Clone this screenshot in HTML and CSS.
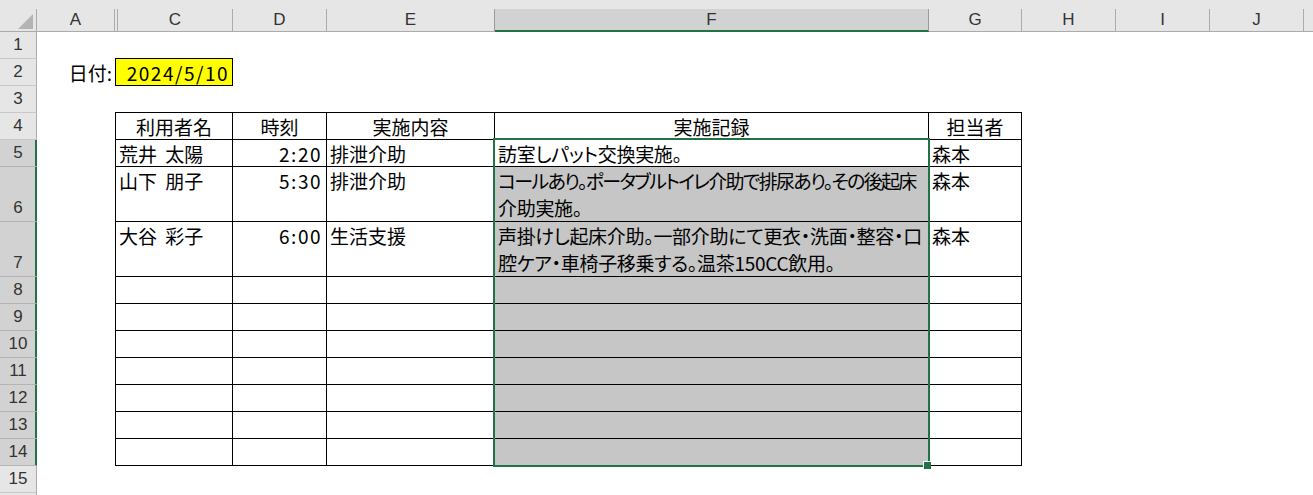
FILE: index.html
```html
<!DOCTYPE html>
<html>

<head>
    <title>介護記録</title>
    <link rel="stylesheet" href="styles.css">
</head>

<body>
    <div class="sheet">
        <!-- column letters -->
        <div class="col-heads">
            <div class="corner">
                <svg width="15" height="15" viewBox="0 0 15 15"><polygon points="15,0 15,15 0,15" fill="#b4b4b4" /></svg>
            </div>
            <div class="col-head w-a">A</div>
            <div class="col-head w-b"></div>
            <div class="col-head w-c">C</div>
            <div class="col-head w-d">D</div>
            <div class="col-head w-e">E</div>
            <div class="col-head w-f active">F</div>
            <div class="col-head w-g">G</div>
            <div class="col-head w-h">H</div>
            <div class="col-head w-i">I</div>
            <div class="col-head w-j">J</div>
            <div class="col-head w-k"></div>
        </div>

        <div class="sheet-body">
            <!-- row numbers -->
            <div class="row-heads">
                <div class="row-head">1</div>
                <div class="row-head">2</div>
                <div class="row-head">3</div>
                <div class="row-head">4</div>
                <div class="row-head sel">5</div>
                <div class="row-head sel tall">6</div>
                <div class="row-head sel tall">7</div>
                <div class="row-head sel">8</div>
                <div class="row-head sel">9</div>
                <div class="row-head sel">10</div>
                <div class="row-head sel">11</div>
                <div class="row-head sel">12</div>
                <div class="row-head sel">13</div>
                <div class="row-head sel">14</div>
                <div class="row-head">15</div>
                <div class="row-head">16</div>
            </div>

            <div class="cells">
                <div class="spacer"></div>
                <div class="date-row">
                    <span class="date-label">日付:</span>
                    <span class="date-box">2024/5/10</span>
                </div>
                <div class="spacer"></div>

                <div class="table-wrap">
                    <div class="grid">
                        <div class="cell center">利用者名</div>
                        <div class="cell center">時刻</div>
                        <div class="cell center">実施内容</div>
                        <div class="cell center">実施記録</div>
                        <div class="cell center">担当者</div>

                        <div class="cell name">荒井 太陽</div>
                        <div class="cell num">2:20</div>
                        <div class="cell">排泄介助</div>
                        <div class="cell note">訪室しパット交換実施。</div>
                        <div class="cell">森本</div>

                        <div class="cell name">山下 朋子</div>
                        <div class="cell num">5:30</div>
                        <div class="cell">排泄介助</div>
                        <div class="cell note rec"><span class="tight">コールあり。ポータブルトイレ介助で排尿あり。その後起床</span><br>介助実施。</div>
                        <div class="cell">森本</div>

                        <div class="cell name">大谷 彩子</div>
                        <div class="cell num">6:00</div>
                        <div class="cell">生活支援</div>
                        <div class="cell note rec">声掛けし起床介助。一部介助にて更衣・洗面・整容・口<br>腔ケア・車椅子移乗する。温茶150CC飲用。</div>
                        <div class="cell">森本</div>

                        <div class="cell"></div><div class="cell"></div><div class="cell"></div><div class="cell rec"></div><div class="cell"></div>
                        <div class="cell"></div><div class="cell"></div><div class="cell"></div><div class="cell rec"></div><div class="cell"></div>
                        <div class="cell"></div><div class="cell"></div><div class="cell"></div><div class="cell rec"></div><div class="cell"></div>
                        <div class="cell"></div><div class="cell"></div><div class="cell"></div><div class="cell rec"></div><div class="cell"></div>
                        <div class="cell"></div><div class="cell"></div><div class="cell"></div><div class="cell rec"></div><div class="cell"></div>
                        <div class="cell"></div><div class="cell"></div><div class="cell"></div><div class="cell rec"></div><div class="cell"></div>
                        <div class="cell"></div><div class="cell"></div><div class="cell"></div><div class="cell rec"></div><div class="cell"></div>
                    </div>

                    <!-- selected range F5:F14 -->
                    <div class="selection"><span class="handle"></span></div>
                </div>
            </div>
        </div>
    </div>
</body>

</html>
```

FILE: styles.css
```css
body {
    margin: 0;
    background: #fff;
    overflow: hidden;
    font-family: "Noto Sans CJK JP", sans-serif;
}

.sheet {
    width: 1313px;
    height: 495px;
    overflow: hidden;
}

/* column header band */
.col-heads {
    display: flex;
    height: 32px;
    padding-top: 9px;
    box-sizing: border-box;
    background: #e6e6e6;
    border-bottom: 1px solid #ababab;
}

.corner {
    width: 37px;
    box-sizing: border-box;
    border-right: 1px solid #ababab;
    display: flex;
    justify-content: flex-end;
    align-items: flex-end;
    padding: 0 3px 2px 0;
}

.corner svg {
    display: block;
}

.col-head {
    box-sizing: border-box;
    border-right: 1px solid #ababab;
    height: 22px;
    line-height: 22px;
    text-align: center;
    font-family: "Liberation Sans", Arial, sans-serif;
    font-size: 17px;
    color: #333;
}

.col-head.active {
    background: #d2d2d2;
    box-shadow: inset 0 -1px #217346, 0 1px #217346;
    border-right-color: #9b9b9b;
}

.w-a { width: 78px; }
.w-b { width: 3px; }
.w-c { width: 115px; }
.w-d { width: 94px; }
.w-e { width: 168px; border-right-color: #9b9b9b; }
.w-f { width: 434px; }
.w-g { width: 93px; }
.w-h { width: 94px; }
.w-i { width: 94px; }
.w-j { width: 94px; }
.w-k { flex: 1; border-right: none; }

.sheet-body {
    display: flex;
}

/* row numbers */
.row-heads {
    width: 37px;
    flex-shrink: 0;
}

.row-head {
    box-sizing: border-box;
    height: 27px;
    line-height: 26px;
    border-bottom: 1px solid #c8c8c8;
    border-right: 1px solid #ababab;
    background: #e6e6e6;
    text-align: center;
    font-family: "Liberation Sans", Arial, sans-serif;
    font-size: 17px;
    color: #333;
}

.row-head.tall {
    height: 55px;
    line-height: 26px;
    padding-top: 28px;
}

.row-head.sel {
    background: #d2d2d2;
    border-bottom-color: #b4b4b4;
    border-right: 1px solid #217346;
    box-shadow: inset -1px 0 #217346;
}

/* cell area */
.cells {
    flex: 1;
}

.spacer {
    height: 26px;
}

.date-row {
    display: flex;
    height: 28px;
    font-size: 19px;
    color: #000;
}

.date-label {
    width: 78px;
    box-sizing: border-box;
    padding-right: 3px;
    text-align: right;
    line-height: 30px;
}

.date-box {
    width: 118px;
    box-sizing: border-box;
    border: 1px solid #000;
    background: #ffff00;
    text-align: right;
    padding-right: 3px;
    line-height: 27px;
    letter-spacing: 1.5px;
}

.table-wrap {
    position: relative;
    margin-left: 78px;
    width: fit-content;
}

.grid {
    display: grid;
    grid-template-columns: 116px 93px 167px 433px 92px;
    grid-template-rows: 26px 26px 54px 54px repeat(7, 26px);
    gap: 1px;
    padding: 1px;
    background: #000;
}

.cell {
    background: #fff;
    padding: 0 3px;
    font-size: 19px;
    line-height: 27px;
    color: #000;
    white-space: nowrap;
    overflow: hidden;
    font-feature-settings: "palt";
}

.cell.center {
    text-align: center;
}

.cell.name {
    word-spacing: 4px;
}

.cell.num {
    text-align: right;
    padding-right: 4px;
    letter-spacing: 1.5px;
}

.cell.note {
    letter-spacing: -0.3px;
}

.cell.note .tight {
    letter-spacing: -1.7px;
}

.cell.rec {
    background: #c6c6c6;
}

.selection {
    position: absolute;
    left: 378px;
    top: 26px;
    width: 437px;
    height: 329px;
    box-sizing: border-box;
    border: 2px solid #217346;
}

.handle {
    position: absolute;
    right: -3px;
    bottom: -4px;
    width: 8px;
    height: 8px;
    box-sizing: border-box;
    background: #217346;
    border-left: 1px solid #fff;
    border-top: 1px solid #fff;
}
```
